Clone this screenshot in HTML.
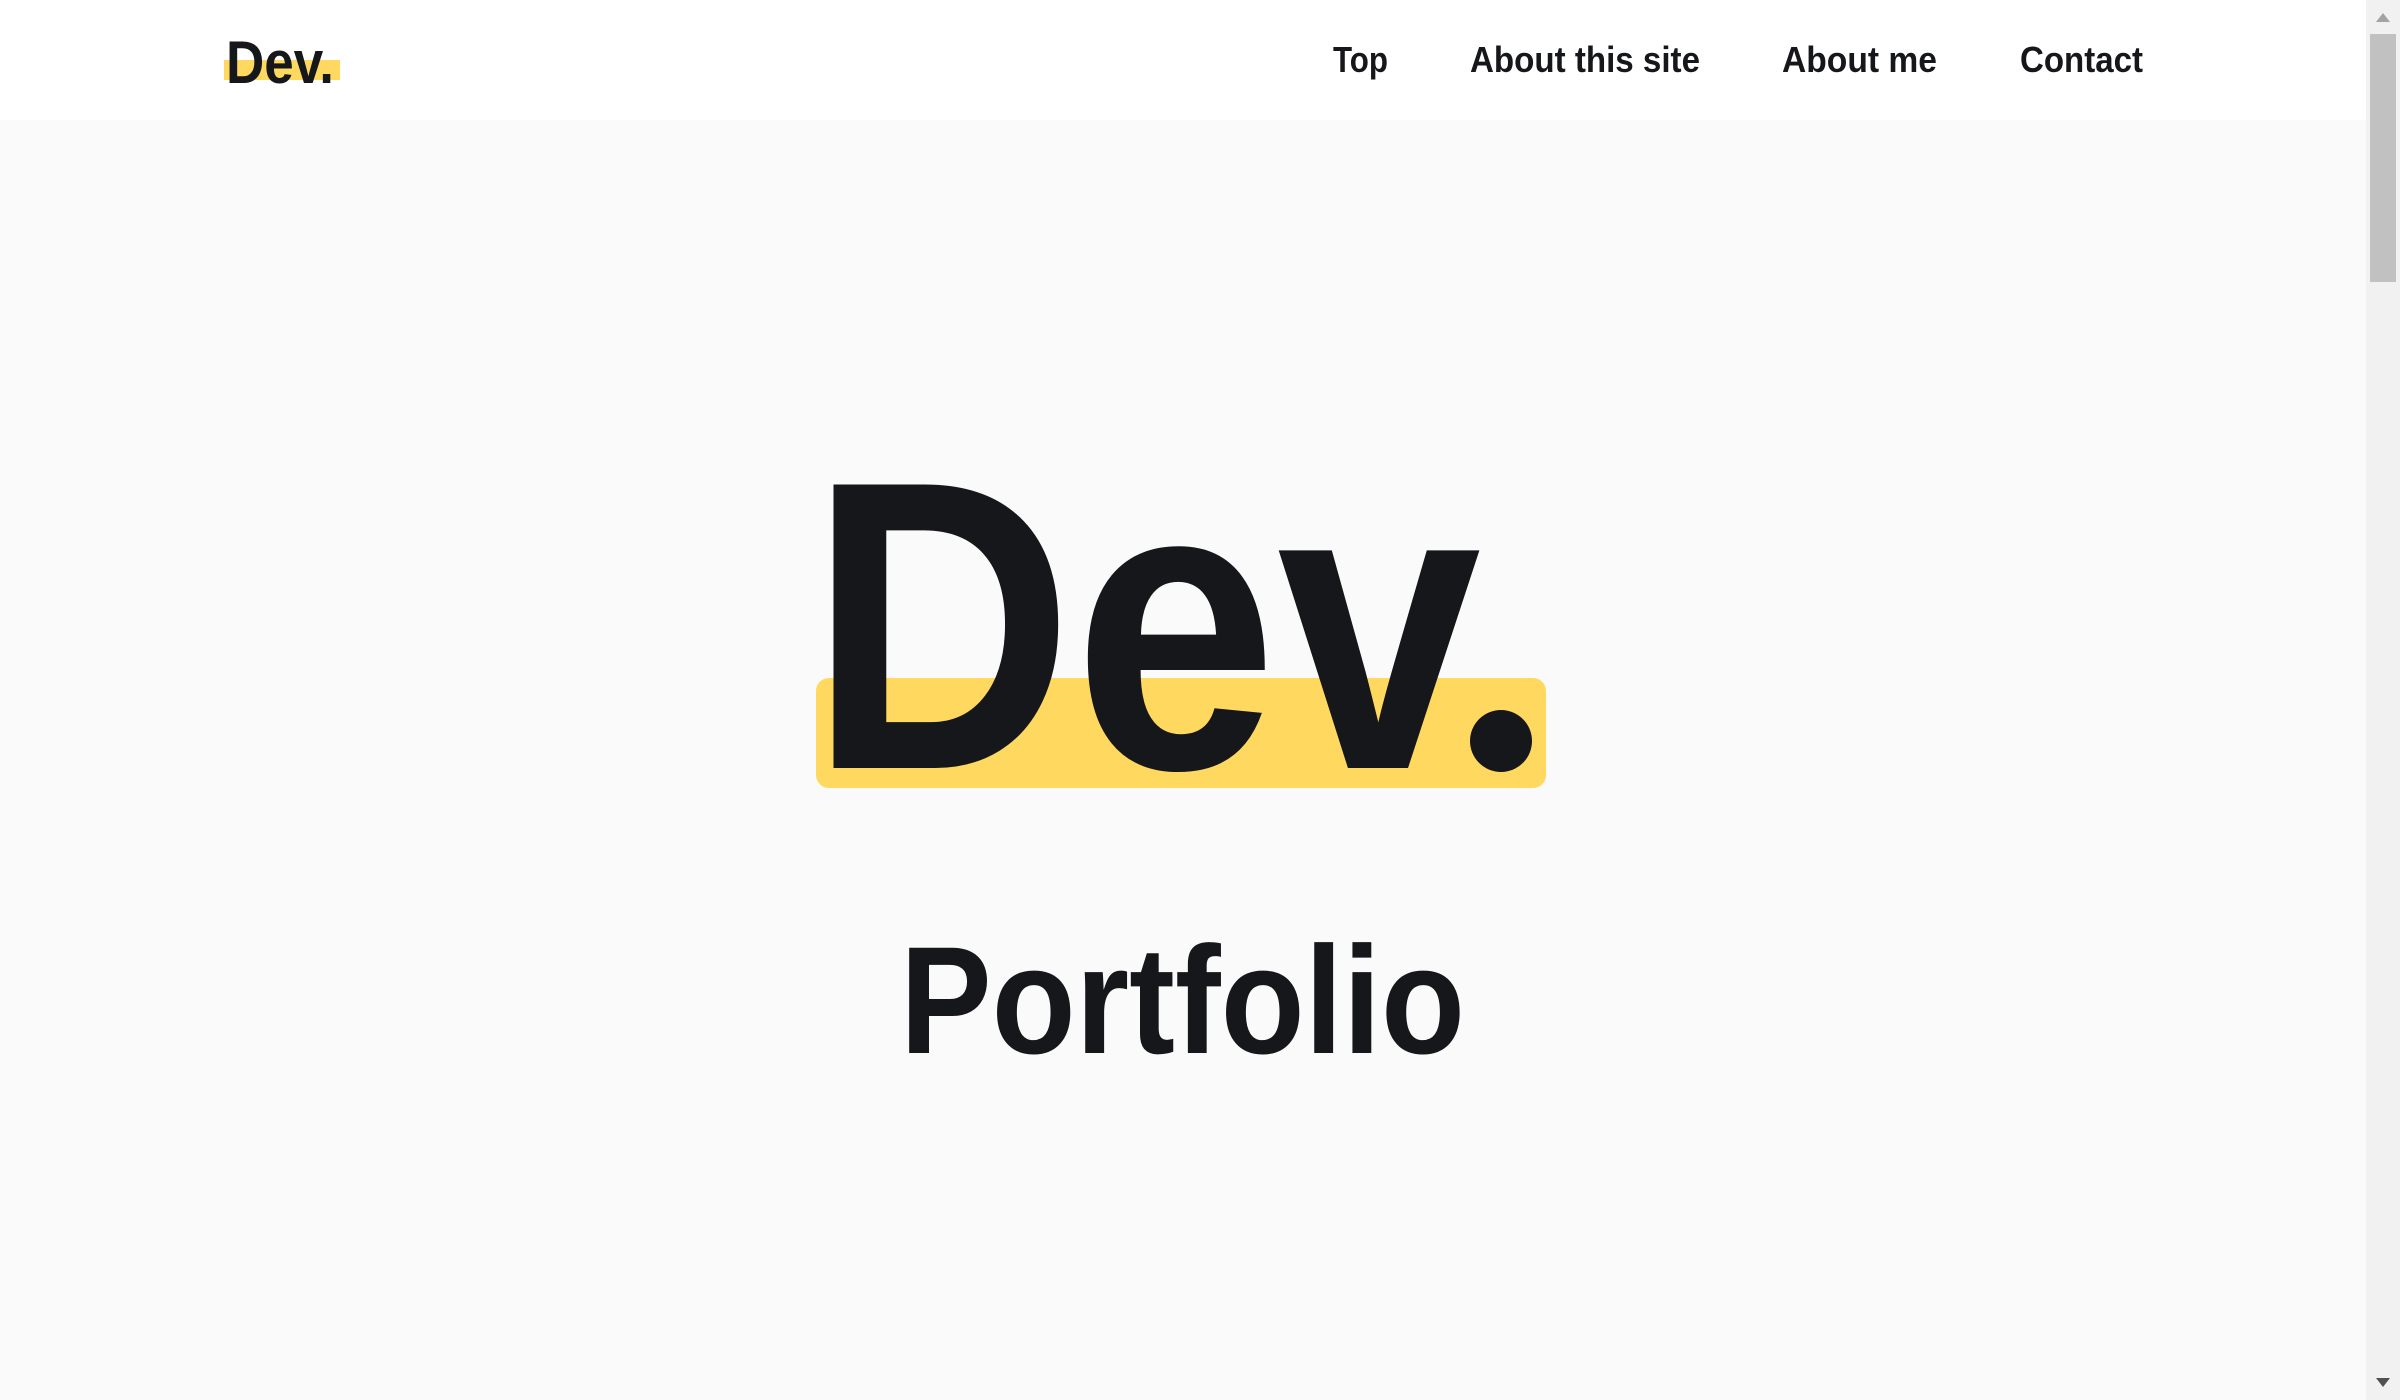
<!DOCTYPE html>
<html><head><meta charset="utf-8"><style>
html,body{margin:0;padding:0;width:2400px;height:1400px;overflow:hidden;background:#fafafa}
svg{display:block}
text{font-family:"Liberation Sans",Arial,sans-serif;font-weight:bold;fill:#16171b}
</style></head><body>
<svg width="2400" height="1400" viewBox="0 0 2400 1400" xmlns="http://www.w3.org/2000/svg">
<rect x="0" y="0" width="2366" height="1400" fill="#fafafa"/>
<rect x="0" y="0" width="2366" height="120" fill="#ffffff"/>
<!-- logo -->
<rect x="224" y="60" width="116" height="20" fill="#ffd95f"/>
<text x="226" y="83" font-size="60" textLength="108" lengthAdjust="spacingAndGlyphs">Dev.</text>
<!-- nav -->
<text x="1333" y="72" font-size="36" textLength="55" lengthAdjust="spacingAndGlyphs">Top</text>
<text x="1470" y="72" font-size="36" textLength="230" lengthAdjust="spacingAndGlyphs">About this site</text>
<text x="1782" y="72" font-size="36" textLength="155" lengthAdjust="spacingAndGlyphs">About me</text>
<text x="2020" y="72" font-size="36" textLength="123" lengthAdjust="spacingAndGlyphs">Contact</text>
<!-- hero -->
<rect x="816" y="678" width="730" height="110" rx="13" fill="#ffd95f"/>
<text x="809" y="768" font-size="412" textLength="672" lengthAdjust="spacingAndGlyphs">Dev</text>
<circle cx="1501" cy="741" r="31" fill="#16171b"/>
<text x="900" y="1053" font-size="153" textLength="565" lengthAdjust="spacingAndGlyphs">Portfolio</text>
<!-- scrollbar -->
<rect x="2366" y="0" width="34" height="1400" fill="#f1f1f1"/>
<rect x="2370" y="34" width="26" height="248" fill="#c1c1c1"/>
<path d="M2376 22 L2383 13 L2390 22 Z" fill="#a3a3a3"/>
<path d="M2376 1378 L2383 1387 L2390 1378 Z" fill="#505050"/>
</svg>
</body></html>
